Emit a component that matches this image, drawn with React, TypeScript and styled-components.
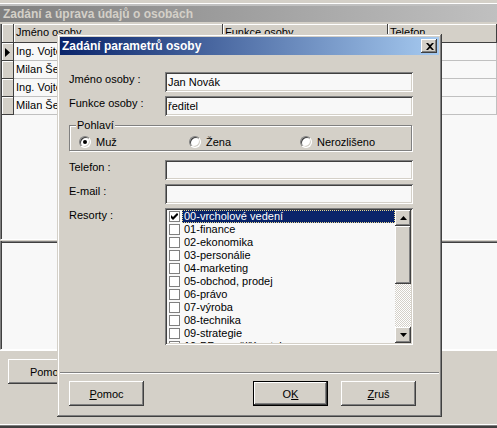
import React from "react";
import styled, { createGlobalStyle } from "styled-components";

const GlobalStyle = createGlobalStyle`
  html, body { margin: 0; padding: 0; background: #d4d0c8; }
  body { font-family: "Liberation Sans", Arial, sans-serif; font-size: 11px; color: #000; }
  * { box-sizing: border-box; }
`;

const raised = `box-shadow: inset -1px -1px #404040, inset 1px 1px #ffffff, inset -2px -2px #808080, inset 2px 2px #d4d0c8;`;
const sunken = `box-shadow: inset 1px 1px #808080, inset -1px -1px #ffffff, inset 2px 2px #404040, inset -2px -2px #d4d0c8;`;

const Screen = styled.div`
  position: relative;
  width: 497px;
  height: 428px;
  overflow: hidden;
  background: #d4d0c8;
`;

/* ---------- background window ---------- */
const BackWindow = styled.div`
  display: flex;
  flex-direction: column;
  height: 100%;
`;

const TopStrip = styled.div`
  height: 6px;
  background: linear-gradient(#d4d0c8 0 3px, #ffffff 3px 4px, #c0c0c0 4px);
`;

const InactiveTitle = styled.div`
  height: 16px;
  padding-left: 3px;
  display: flex;
  align-items: center;
  background: linear-gradient(90deg, #808080, #c0c0c0);
  color: #d4d0c8;
  font-weight: bold;
  font-size: 12px;
  white-space: nowrap;
`;

const DataPanel = styled.div`
  margin-top: 2px;
  height: 216px;
  background: #f8f8f8;
  border-left: 1px solid #808080;
  border-bottom: 1px solid #ffffff;
  padding-left: 1px;
  box-shadow: inset 1px 0 #404040;
  display: flex;
  flex-direction: column;
`;

const GridRow = styled.div<{ $head?: boolean }>`
  display: grid;
  grid-template-columns: 12px 209px 165px 1fr;
  height: ${(p) => (p.$head ? 19 : 18)}px;
`;

const Selector = styled.div`
  background: #d4d0c8;
  box-shadow: inset -1px -1px #404040, inset 1px 1px #ffffff;
  display: flex;
  align-items: center;
  padding-left: 3px;
`;

const HeadCell = styled.div`
  background: #d4d0c8;
  box-shadow: inset -1px -1px #404040, inset 1px 1px #ffffff;
  padding: 2px 0 0 2px;
  white-space: nowrap;
  overflow: hidden;
`;

const Cell = styled.div`
  background: #f8f8f8;
  border-right: 1px solid #c0c0c0;
  border-bottom: 1px solid #c0c0c0;
  padding: 2px 0 0 2px;
  white-space: nowrap;
  overflow: hidden;
`;

const SecondPanel = styled.div`
  margin-top: 1px;
  height: 109px;
  background: #f8f8f8;
  border-left: 1px solid #808080;
  border-bottom: 1px solid #ffffff;
  box-shadow: inset 1px 0 #404040, inset 0 1px #808080, inset 0 2px #404040;
`;

const Footer = styled.div`
  flex: 1;
  border-top: 1px solid #ffffff;
  padding: 8px 8px;
  display: flex;
  align-items: flex-start;
`;

const BottomLines = styled.div`
  height: 4px;
  background: linear-gradient(#ffffff 0 1px, #808080 1px 2px, #404040 2px);
`;

/* ---------- dialog ---------- */
const Dialog = styled.div`
  position: absolute;
  left: 57px;
  top: 34px;
  width: 385px;
  height: 383px;
  padding: 3px;
  background: #d4d0c8;
  box-shadow: inset -1px -1px #404040, inset 1px 1px #d4d0c8, inset -2px -2px #808080, inset 2px 2px #ffffff;
  display: flex;
  flex-direction: column;
`;

const TitleBar = styled.div`
  height: 18px;
  flex: none;
  display: flex;
  align-items: center;
  justify-content: space-between;
  padding: 0 2px 0 2px;
  background: linear-gradient(90deg, #0a246a, #a6caf0);
  color: #ffffff;
  font-weight: bold;
  font-size: 12px;
  white-space: nowrap;
`;

const CloseButton = styled.div`
  width: 16px;
  height: 14px;
  background: #d4d0c8;
  ${raised}
  display: flex;
  align-items: center;
  justify-content: center;
  padding-left: 1px;
`;

const Body = styled.div`
  padding: 17px 26px 0 9px;
  display: flex;
  flex-direction: column;
`;

const FieldRow = styled.div<{ $gap?: number }>`
  display: grid;
  grid-template-columns: 96px 248px;
  align-items: start;
  margin-top: ${(p) => p.$gap ?? 4}px;
`;

const Label = styled.div`
  line-height: 13px;
  padding-top: 1px;
  white-space: nowrap;
`;

const TextBox = styled.div`
  height: 20px;
  background: #f8f8f8;
  ${sunken}
  padding: 0 0 0 3px;
  line-height: 20px;
  white-space: nowrap;
`;

const GroupBox = styled.div`
  position: relative;
  margin-top: 9px;
  width: 343px;
  height: 26px;
  border: 1px solid #808080;
  box-shadow: inset 1px 1px #ffffff, 1px 1px #ffffff;
  display: grid;
  grid-template-columns: 110px 111px 1fr;
  padding: 10px 0 0 9px;
`;

const Legend = styled.span`
  position: absolute;
  top: -7px;
  left: 6px;
  padding: 0 1px;
  line-height: 13px;
  background: #d4d0c8;
`;

const RadioOption = styled.label`
  display: flex;
  align-items: center;
  gap: 5px;
  height: 12px;
  line-height: 12px;
`;

const Radio = styled.span<{ $checked?: boolean }>`
  position: relative;
  width: 12px;
  height: 12px;
  flex: none;
  border-radius: 50%;
  background: #ffffff;
  border: 1px solid;
  border-color: #808080 #ffffff #ffffff #808080;
  box-shadow: inset 1px 1px #404040, inset -1px -1px #d4d0c8;
  &::after {
    content: "";
    display: ${(p) => (p.$checked ? "block" : "none")};
    position: absolute;
    left: 3px;
    top: 3px;
    width: 4px;
    height: 4px;
    border-radius: 50%;
    background: #000;
  }
`;

const ListBox = styled.div`
  height: 137px;
  padding: 2px;
  background: #f8f8f8;
  ${sunken}
  display: flex;
`;

const Items = styled.div`
  flex: 1;
  overflow: hidden;
  padding-left: 2px;
`;

const Item = styled.div`
  height: 13px;
  display: flex;
  align-items: center;
`;

const CheckBox = styled.span`
  width: 11px;
  height: 11px;
  flex: none;
  border: 1px solid #808080;
  background: #ffffff;
  display: flex;
  align-items: center;
  justify-content: center;
  margin-right: 2px;
`;

const ItemText = styled.span<{ $selected?: boolean }>`
  flex: 1;
  height: 13px;
  line-height: 11px;
  padding-left: 1px;
  white-space: nowrap;
  color: ${(p) => (p.$selected ? "#ffffff" : "#000000")};
  background: ${(p) => (p.$selected ? "#0a246a" : "transparent")};
  border: 1px dotted ${(p) => (p.$selected ? "#e8d890" : "transparent")};
`;

const ScrollBar = styled.div`
  width: 16px;
  flex: none;
  display: flex;
  flex-direction: column;
`;

const ScrollBtn = styled.div<{ $h: number }>`
  height: ${(p) => p.$h}px;
  background: #d4d0c8;
  ${raised}
  display: flex;
  align-items: center;
  justify-content: center;
`;

const Track = styled.div`
  flex: 1;
  background: repeating-conic-gradient(#d4d0c8 0 25%, #ffffff 0 50%) 0 0 / 2px 2px;
`;

const Separator = styled.div`
  margin-top: 27px;
  height: 2px;
  border-top: 1px solid #808080;
  border-bottom: 1px solid #ffffff;
`;

const ButtonRow = styled.div`
  padding: 7px 23px 0 9px;
  display: flex;
  justify-content: space-between;
`;

const ButtonGroup = styled.div`
  display: flex;
  gap: 13px;
`;

const Button = styled.div<{ $default?: boolean; $w?: number; $h?: number }>`
  width: ${(p) => p.$w ?? 75}px;
  height: ${(p) => p.$h ?? 25}px;
  flex: none;
  background: #d4d0c8;
  display: flex;
  align-items: center;
  justify-content: center;
  ${(p) =>
    p.$default
      ? `border: 1px solid #000; box-shadow: inset -1px -1px #404040, inset 1px 1px #ffffff, inset -2px -2px #808080;`
      : raised}
  u { text-decoration: underline; text-underline-offset: 1px; }
`;

const Arrow = ({ up }: { up?: boolean }) => (
  <svg width="7" height="4" viewBox="0 0 7 4">
    <polygon points={up ? "3.5,0 7,4 0,4" : "0,0 7,0 3.5,4"} fill="#000" />
  </svg>
);

const CheckMark = () => (
  <svg width="7" height="7" viewBox="0 0 7 7">
    <path d="M0 2 L2 4 L6 0 L7 1 L7 2 L2 7 L0 5 Z" fill="#000" />
  </svg>
);

const CloseX = () => (
  <svg width="8" height="7" viewBox="0 0 8 7">
    <path d="M0 0 H2 L4 2 L6 0 H8 L5 3.5 L8 7 H6 L4 5 L2 7 H0 L3 3.5 Z" fill="#000" />
  </svg>
);

const RowPointer = () => (
  <svg width="5" height="9" viewBox="0 0 5 9">
    <polygon points="0,0 5,4.5 0,9" fill="#000" />
  </svg>
);

const people = [
  ["Ing. Vojtěch Kratochvíl", "ředitel", ""],
  ["Milan Ševčík", "ekonom", ""],
  ["Ing. Vojtěch Dvořák", "technik", ""],
  ["Milan Šebesta", "obchodník", ""],
];

const resorts = [
  "00-vrcholové vedení",
  "01-finance",
  "02-ekonomika",
  "03-personálie",
  "04-marketing",
  "05-obchod, prodej",
  "06-právo",
  "07-výroba",
  "08-technika",
  "09-strategie",
  "10-PR a vnější vztahy",
];

export default function App() {
  return (
    <Screen>
      <GlobalStyle />
      <BackWindow>
        <TopStrip />
        <InactiveTitle>Zadání a úprava údajů o osobách</InactiveTitle>
        <DataPanel>
          <GridRow $head>
            <Selector />
            <HeadCell>Jméno osoby</HeadCell>
            <HeadCell>Funkce osoby</HeadCell>
            <HeadCell>Telefon</HeadCell>
          </GridRow>
          {people.map((p, i) => (
            <GridRow key={i}>
              <Selector>{i === 0 && <RowPointer />}</Selector>
              <Cell>{p[0]}</Cell>
              <Cell>{p[1]}</Cell>
              <Cell>{p[2]}</Cell>
            </GridRow>
          ))}
        </DataPanel>
        <SecondPanel />
        <Footer>
          <Button $w={78} $h={25}>Pomoc</Button>
        </Footer>
        <BottomLines />
      </BackWindow>

      <Dialog>
        <TitleBar>
          <span>Zadání parametrů osoby</span>
          <CloseButton>
            <CloseX />
          </CloseButton>
        </TitleBar>
        <Body>
          <FieldRow $gap={0}>
            <Label>Jméno osoby :</Label>
            <TextBox>Jan Novák</TextBox>
          </FieldRow>
          <FieldRow>
            <Label>Funkce osoby :</Label>
            <TextBox>ředitel</TextBox>
          </FieldRow>
          <GroupBox>
            <Legend>Pohlaví</Legend>
            <RadioOption>
              <Radio $checked />
              Muž
            </RadioOption>
            <RadioOption>
              <Radio />
              Žena
            </RadioOption>
            <RadioOption>
              <Radio />
              Nerozlišeno
            </RadioOption>
          </GroupBox>
          <FieldRow $gap={9}>
            <Label>Telefon :</Label>
            <TextBox />
          </FieldRow>
          <FieldRow>
            <Label>E-mail :</Label>
            <TextBox />
          </FieldRow>
          <FieldRow>
            <Label>Resorty :</Label>
            <ListBox>
              <Items>
                {resorts.map((r, i) => (
                  <Item key={r}>
                    <CheckBox>{i === 0 && <CheckMark />}</CheckBox>
                    <ItemText $selected={i === 0}>{r}</ItemText>
                  </Item>
                ))}
              </Items>
              <ScrollBar>
                <ScrollBtn $h={16}>
                  <Arrow up />
                </ScrollBtn>
                <ScrollBtn $h={58} />
                <Track />
                <ScrollBtn $h={16}>
                  <Arrow />
                </ScrollBtn>
              </ScrollBar>
            </ListBox>
          </FieldRow>
        </Body>
        <Separator />
        <ButtonRow>
          <Button>
            <span>
              <u>P</u>omoc
            </span>
          </Button>
          <ButtonGroup>
            <Button $default>
              <span>
                O<u>K</u>
              </span>
            </Button>
            <Button>
              <span>
                <u>Z</u>ruš
              </span>
            </Button>
          </ButtonGroup>
        </ButtonRow>
      </Dialog>
    </Screen>
  );
}
